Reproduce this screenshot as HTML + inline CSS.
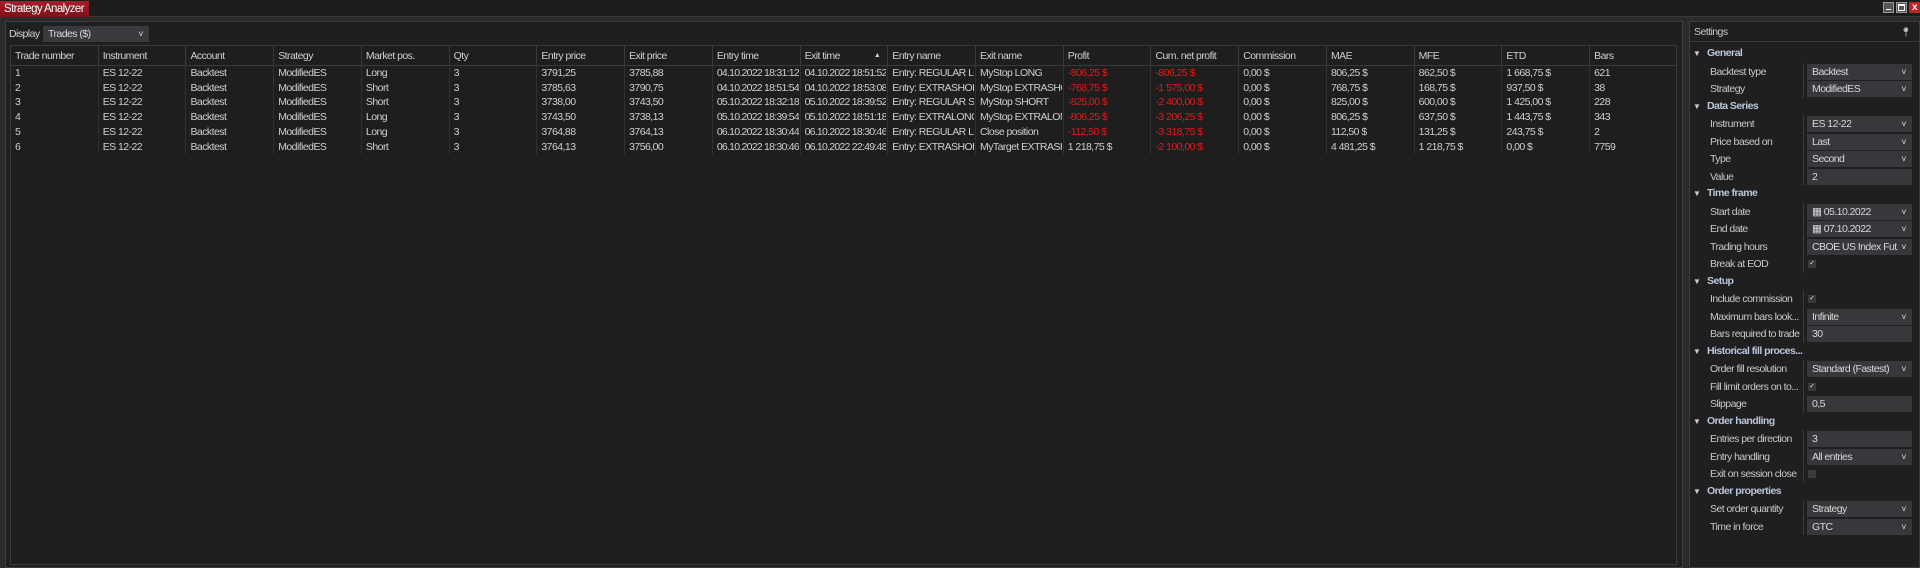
<!DOCTYPE html>
<html><head><meta charset="utf-8"><style>
*{margin:0;padding:0;box-sizing:border-box}
body{width:1920px;height:568px;background:#2b2b2b;font-family:"Liberation Sans",sans-serif;font-size:10.5px;letter-spacing:-0.55px;color:#cfcfcf;position:relative;overflow:hidden}
.a{position:absolute;white-space:nowrap}
.tbar{left:0;top:0;width:1920px;height:17px;background:#1c1c1c;border-bottom:1px solid #3a3a3a}
.tab{left:0;top:1px;width:89px;height:16px;background:linear-gradient(#a3202a,#7e1018);color:#fff;font-size:11.5px;line-height:16px;padding-left:4px;letter-spacing:-0.6px}
.main{left:5px;top:21px;width:1678px;height:547px;background:#1f1f1f;border:1px solid #3c3c3c}
.set{left:1689px;top:21px;width:231px;height:547px;background:#1f1f1f;border:1px solid #3c3c3c}
.dd{background:#3a3a3e;color:#d8d8d8;height:16px;line-height:16px;padding-left:5px}
.chev{position:absolute;right:6px;top:0;font-size:9px;color:#ddd}
.tbl{left:10px;top:45px;width:1667px;height:520px;border:1px solid #3a3a3a;background:#1e1e1e}
.hdr{left:10px;top:45px;width:1667px;height:21px;border-bottom:1px solid #3a3a3a}
.cell{position:absolute;height:14.7px;line-height:14.7px;padding-left:5px;overflow:hidden;white-space:nowrap}
.dt{letter-spacing:-0.75px}
.red{color:#e01a1a}
.sl{position:absolute;left:1710px;color:#c8c8c8;line-height:18px}
.sh{position:absolute;left:1707px;color:#b9c6dc;font-weight:bold;line-height:17.5px}
.tri{position:absolute;left:1693px;font-size:8px;color:#ccc;line-height:17.5px}
.inp{position:absolute;left:1807px;width:105px;height:16px;background:#38383c;color:#d8d8d8;line-height:16px;padding-left:5px;overflow:hidden}
.cb{position:absolute;left:1808px;width:8px;height:8px;background:#3a3a3e;font-size:7px;line-height:8px;text-align:center;color:#ddd;letter-spacing:0}
.div{position:absolute;left:1803px;width:1px;background:#3a3a3a}
</style></head><body>
<div class="a tbar"></div>
<div class="a tab">Strategy Analyzer</div>
<div class="a" style="left:1883px;top:2px;width:11px;height:11px;background:#555;border:1px solid #999"><div style="position:absolute;left:2px;bottom:2px;width:5px;height:1px;background:#fff"></div></div>
<div class="a" style="left:1896px;top:2px;width:11px;height:11px;background:#555;border:1px solid #999"><div style="position:absolute;left:1px;top:1px;width:7px;height:7px;border:1px solid #fff;border-top-width:2px"></div></div>
<div class="a" style="left:1909px;top:2px;width:11px;height:11px;background:#c0222a;color:#fff;font-size:10px;font-weight:bold;line-height:11px;text-align:center">x</div>
<div class="a main"></div>
<div class="a set"></div>
<div class="a" style="left:9px;top:26px;line-height:16px">Display</div>
<div class="a dd" style="left:43px;top:26px;width:106px">Trades ($)<span class="chev">&#x2c5;</span></div>
<div class="a tbl"></div>
<div class="a hdr"></div>
<div id="t"></div>
<div class="a" style="left:1690px;top:22px;width:229px;height:20px;border-bottom:1px solid #3a3a3a;line-height:20px;padding-left:4px;color:#c8c8c8">Settings<span style="position:absolute;right:8px;top:0;color:#bbb;font-size:9px">&#x1F4CD;&#xFE0E;</span></div>
<div id="s"></div>
<script>
var cols=["Trade number","Instrument","Account","Strategy","Market pos.","Qty","Entry price","Exit price","Entry time","Exit time","Entry name","Exit name","Profit","Cum. net profit","Commission","MAE","MFE","ETD","Bars"];
var rows=[
["1","ES 12-22","Backtest","ModifiedES","Long","3","3791,25","3785,88","04.10.2022 18:31:12","04.10.2022 18:51:52","Entry: REGULAR LONG","MyStop LONG","-806,25 $","-806,25 $","0,00 $","806,25 $","862,50 $","1 668,75 $","621"],
["2","ES 12-22","Backtest","ModifiedES","Short","3","3785,63","3790,75","04.10.2022 18:51:54","04.10.2022 18:53:08","Entry: EXTRASHORT","MyStop EXTRASHORT","-768,75 $","-1 575,00 $","0,00 $","768,75 $","168,75 $","937,50 $","38"],
["3","ES 12-22","Backtest","ModifiedES","Short","3","3738,00","3743,50","05.10.2022 18:32:18","05.10.2022 18:39:52","Entry: REGULAR SHORT","MyStop SHORT","-825,00 $","-2 400,00 $","0,00 $","825,00 $","600,00 $","1 425,00 $","228"],
["4","ES 12-22","Backtest","ModifiedES","Long","3","3743,50","3738,13","05.10.2022 18:39:54","05.10.2022 18:51:18","Entry: EXTRALONG","MyStop EXTRALONG","-806,25 $","-3 206,25 $","0,00 $","806,25 $","637,50 $","1 443,75 $","343"],
["5","ES 12-22","Backtest","ModifiedES","Long","3","3764,88","3764,13","06.10.2022 18:30:44","06.10.2022 18:30:46","Entry: REGULAR LONG","Close position","-112,50 $","-3 318,75 $","0,00 $","112,50 $","131,25 $","243,75 $","2"],
["6","ES 12-22","Backtest","ModifiedES","Short","3","3764,13","3756,00","06.10.2022 18:30:46","06.10.2022 22:49:48","Entry: EXTRASHORT","MyTarget EXTRASHORT","1 218,75 $","-2 100,00 $","0,00 $","4 481,25 $","1 218,75 $","0,00 $","7759"]];
var h="",W=87.73;
for(var i=0;i<19;i++){var x=10+W*i;
h+='<div class="cell" style="left:'+x+'px;top:48px;width:'+(W-1)+'px;line-height:16px;height:16px">'+cols[i]+(i==9?'<span style="position:absolute;right:6px;font-size:7px">&#9650;</span>':'')+'</div>';
if(i>0){h+='<div class="a" style="left:'+x+'px;top:46px;width:1px;height:20px;background:#3a3a3a"></div><div class="a" style="left:'+x+'px;top:66px;width:1px;height:88px;background:#303030"></div>';}
for(var r=0;r<6;r++){var v=rows[r][i];var red=(i==12||i==13)&&v.charAt(0)=="-";
h+='<div class="cell'+(red?' red':'')+(i==8||i==9?' dt':'')+'" style="left:'+x+'px;top:'+(66+r*14.7)+'px;width:'+(W-1)+'px">'+v+'</div>';}}
document.getElementById('t').innerHTML=h;
var S=[["h","General"],["i","Backtest type","Backtest",1],["i","Strategy","ModifiedES",1],["h","Data Series"],["i","Instrument","ES 12-22",1],["i","Price based on","Last",1],["i","Type","Second",1],["i","Value","2",0],["h","Time frame"],["i","Start date","&#9638; 05.10.2022",1],["i","End date","&#9638; 07.10.2022",1],["i","Trading hours","CBOE US Index Fut...",1],["c","Break at EOD",1],["h","Setup"],["c","Include commission",1],["i","Maximum bars look...","Infinite",1],["i","Bars required to trade","30",0],["h","Historical fill proces..."],["i","Order fill resolution","Standard (Fastest)",1],["c","Fill limit orders on to...",1],["i","Slippage","0,5",0],["h","Order handling"],["i","Entries per direction","3",0],["i","Entry handling","All entries",1],["c","Exit on session close",0],["h","Order properties"],["i","Set order quantity","Strategy",1],["i","Time in force","GTC",1]];
var g="";
for(var k=0;k<S.length;k++){var y=45.25+17.5*k,e=S[k];
if(e[0]=="h"){g+='<div class="tri" style="top:'+y+'px">&#9660;</div><div class="sh" style="top:'+y+'px">'+e[1]+'</div>';
}else{g+='<div class="sl" style="top:'+y+'px">'+e[1]+'</div>';
g+='<div class="div" style="top:'+y+'px;height:17.5px"></div>';
if(e[0]=="i")g+='<div class="inp" style="top:'+(y+1)+'px">'+e[2]+(e[3]?'<span class="chev" style="background:#38383c;padding-left:3px">&#x2c5;</span>':'')+'</div>';
else g+='<div class="cb" style="top:'+(y+5)+'px">'+(e[2]?'&#10003;':'')+'</div>';}}
document.getElementById('s').innerHTML=g;
</script>
</body></html>
